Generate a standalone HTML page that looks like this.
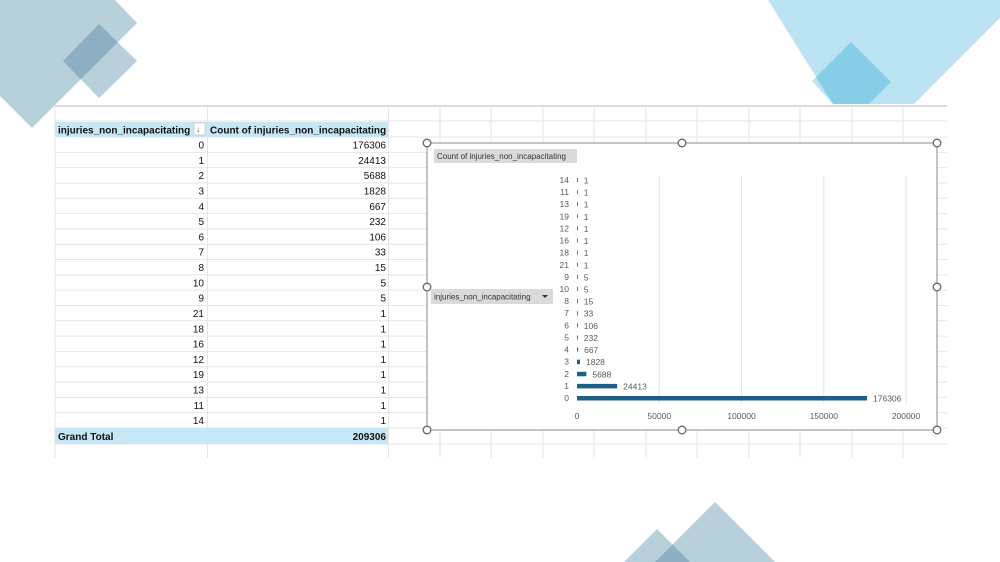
<!DOCTYPE html>
<html><head><meta charset="utf-8"><style>
body{margin:0;width:1000px;height:562px;background:#fff;position:relative;overflow:hidden;font-family:"Liberation Sans",sans-serif}
svg{position:absolute;left:0;top:0}
.t{font-size:10px;fill:#111}
.c{font-size:8.5px;fill:#595959}
</style></head><body>
<svg width="1000" height="562" viewBox="0 0 1000 562">
<defs>
<clipPath id="bigL"><polygon points="0,0 115,0 137,23 32,128 0,96"/></clipPath>
<clipPath id="bigR"><polygon points="768,0 1000,0 1000,18 914,104 833,104"/></clipPath>
<clipPath id="bigB"><polygon points="715,502 775,562 655,562"/></clipPath>
</defs>
<!-- decorative shapes -->
<polygon points="0,0 115,0 137,23 32,128 0,96" fill="#b8cfdc"/>
<polygon points="99,24 137,61 99,98 63,61" fill="#b8cfdc"/>
<polygon points="99,24 137,61 99,98 63,61" fill="#8eaec1" clip-path="url(#bigL)"/>
<polygon points="768,0 1000,0 1000,18 914,104 833,104" fill="#bbe3f2"/>
<polygon points="851,42 891,82 869,104 833,104 812,81" fill="#bbe3f2"/>
<polygon points="851,42 891,82 869,104 833,104 812,81" fill="#86cde8" clip-path="url(#bigR)"/>
<polygon points="715,502 775,562 655,562" fill="#b8cfdc"/>
<polygon points="657,529 690,562 624,562" fill="#b8cfdc"/>
<polygon points="657,529 690,562 624,562" fill="#8fb0c2" clip-path="url(#bigB)"/>
<!-- sheet background -->
<rect x="55" y="106" width="892" height="352" fill="#fff"/>
<line x1="55" y1="106" x2="947" y2="106" stroke="#cfcfcf" stroke-width="1.5"/>
<g stroke="#e6e6e6" stroke-width="1">
<line x1="55" y1="121" x2="947" y2="121"/>
<line x1="55" y1="106" x2="55" y2="458"/>
<line x1="207.5" y1="106" x2="207.5" y2="458"/>
<line x1="388.5" y1="106" x2="388.5" y2="458"/>
<line x1="440" y1="106" x2="440" y2="458"/><line x1="491" y1="106" x2="491" y2="458"/><line x1="543" y1="106" x2="543" y2="458"/><line x1="594" y1="106" x2="594" y2="458"/><line x1="646" y1="106" x2="646" y2="458"/><line x1="697" y1="106" x2="697" y2="458"/><line x1="749" y1="106" x2="749" y2="458"/><line x1="800" y1="106" x2="800" y2="458"/><line x1="852" y1="106" x2="852" y2="458"/><line x1="903" y1="106" x2="903" y2="458"/>
</g>
<g stroke="#e6e6e6" stroke-width="1" id="rows"></g>
<!-- header -->
<rect x="55" y="122" width="333" height="15" fill="#c6e7f4"/>
<rect x="55" y="428" width="333" height="16" fill="#c6e7f4"/>
<text x="58" y="133.5" class="t" font-weight="bold" font-size="9.5">injuries_non_incapacitating</text>
<rect x="194" y="123" width="11" height="12" fill="#fff" stroke="#bbb" stroke-width="0.6"/>
<text x="196" y="132" font-size="8" fill="#555">↓</text>
<text x="210" y="133.5" class="t" font-weight="bold" font-size="9.5">Count of injuries_non_incapacitating</text>
<text x="58" y="440" class="t" font-weight="bold" font-size="9.5">Grand Total</text>
<text x="386" y="440" class="t" font-weight="bold" font-size="9.5" text-anchor="end">209306</text>
<g id="tbl"></g>
<g id="chart"></g>
</svg>
<script>
var ns="http://www.w3.org/2000/svg";
function el(p,n,a,txt){var e=document.createElementNS(ns,n);for(var k in a)e.setAttribute(k,a[k]);if(txt!=null)e.textContent=txt;p.appendChild(e);return e;}
var rows=document.getElementById('rows'),tbl=document.getElementById('tbl');
var data=[[0,176306],[1,24413],[2,5688],[3,1828],[4,667],[5,232],[6,106],[7,33],[8,15],[10,5],[9,5],[21,1],[18,1],[16,1],[12,1],[19,1],[13,1],[11,1],[14,1]];
var h=(428-137)/19;
for(var i=0;i<=19;i++){var y=137+i*h;el(rows,'line',{x1:55,y1:y,x2:947,y2:y});}
el(rows,'line',{x1:55,y1:444,x2:947,y2:444});
for(var i=0;i<data.length;i++){var y=137+i*h+11.5;
el(tbl,'text',{x:204,y:y,'class':'t','text-anchor':'end'},data[i][0]);
el(tbl,'text',{x:386,y:y,'class':'t','text-anchor':'end'},data[i][1]);}
var c=document.getElementById('chart');
el(c,'rect',{x:427,y:143,width:510,height:287,fill:'#fff',stroke:'#8a8a8a','stroke-width':1});
el(c,'rect',{x:434,y:149,width:143,height:14,fill:'#dadada'});
el(c,'text',{x:437,y:159,'font-size':'8px',fill:'#333'},'Count of injuries_non_incapacitating');
el(c,'rect',{x:431,y:289,width:122,height:15,fill:'#dadada'});
el(c,'text',{x:434,y:299.5,'font-size':'8px',fill:'#333'},'injuries_non_incapacitating');
el(c,'polygon',{points:'542,295 548,295 545,298',fill:'#333'});
var x0=577,sc=(906-577)/200000;
for(var g=1;g<=4;g++){var gx=x0+g*50000*sc;el(c,'line',{x1:gx,y1:176,x2:gx,y2:404,stroke:'#e6e6e6'});}
[0,50000,100000,150000,200000].forEach(function(v){el(c,'text',{x:x0+v*sc,y:419,'class':'c','text-anchor':'middle'},v);});
var cd=[[14,1],[11,1],[13,1],[19,1],[12,1],[16,1],[18,1],[21,1],[9,5],[10,5],[8,15],[7,33],[6,106],[5,232],[4,667],[3,1828],[2,5688],[1,24413],[0,176306]];
for(var i=0;i<cd.length;i++){var y=180+i*(398-180)/18;
el(c,'text',{x:569,y:y+3,'class':'c','text-anchor':'end'},cd[i][0]);
var w=Math.max(cd[i][1]*sc,0.8);el(c,'rect',{x:x0,y:y-2,width:w,height:w<2?4:4.5,fill:'#1e5f85'});
el(c,'text',{x:x0+w+6,y:y+3.5,'class':'c'},cd[i][1]);}
[[427,143],[682,143],[937,143],[427,287],[937,287],[427,430],[682,430],[937,430]].forEach(function(p){el(c,'circle',{cx:p[0],cy:p[1],r:3.8,fill:'#fff',stroke:'#666','stroke-width':1.3});});
</script>
</body></html>
